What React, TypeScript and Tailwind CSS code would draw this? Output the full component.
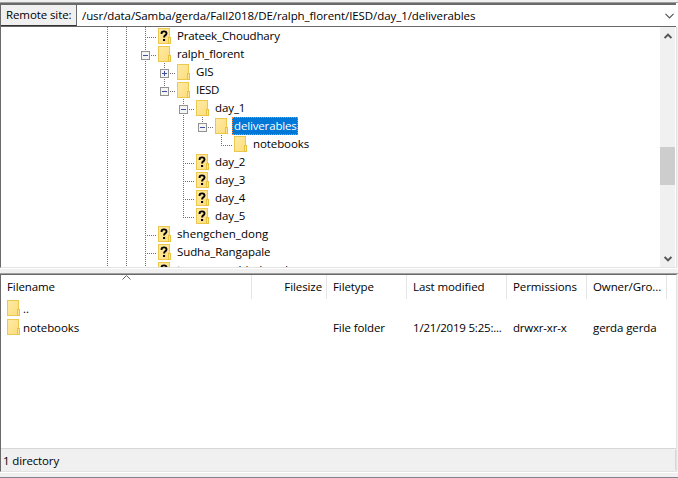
import React from "react";

type Cell = "gap" | "line" | "tee" | "end" | "minusMid" | "minusEnd" | "plusMid";

type Node = { cells: Cell[]; label: string; unknown?: boolean; selected?: boolean; tracking?: string };

const L: Cell = "line";
const G: Cell = "gap";

const nodes: Node[] = [
  { cells: [L, L, "tee"], label: "Prateek_Choudhary", unknown: true, tracking: "tracking-[-0.15px]" },
  { cells: [L, L, "minusMid"], label: "ralph_florent", tracking: "tracking-[-0.15px]" },
  { cells: [L, L, L, "plusMid"], label: "GIS" },
  { cells: [L, L, L, "minusEnd"], label: "IESD", tracking: "tracking-[-0.3px]" },
  { cells: [L, L, L, G, "minusMid"], label: "day_1" },
  { cells: [L, L, L, G, L, "minusEnd"], label: "deliverables", selected: true, tracking: "tracking-[-0.15px]" },
  { cells: [L, L, L, G, L, G, "end"], label: "notebooks" },
  { cells: [L, L, L, G, "tee"], label: "day_2", unknown: true },
  { cells: [L, L, L, G, "tee"], label: "day_3", unknown: true },
  { cells: [L, L, L, G, "tee"], label: "day_4", unknown: true },
  { cells: [L, L, L, G, "end"], label: "day_5", unknown: true },
  { cells: [L, L, "tee"], label: "shengchen_dong", unknown: true, tracking: "tracking-[0.05px]" },
  { cells: [L, L, "tee"], label: "Sudha_Rangapale", unknown: true },
  { cells: [L, L, "tee"], label: "tarunsamy_bindused", unknown: true },
];

function Folder({ unknown }: { unknown?: boolean }) {
  return (
    <svg width="13" height="16" viewBox="0 0 13 16" className="block shrink-0">
      <defs>
        <linearGradient id="fold" x1="0" y1="0" x2="1" y2="1">
          <stop offset="0" stopColor="#ffeba6" />
          <stop offset="1" stopColor="#fddc7b" />
        </linearGradient>
      </defs>
      <rect x="0.5" y="0.5" width="11" height="15" fill="url(#fold)" stroke="#ecc94e" />
      <rect x="10.5" y="9.5" width="2" height="6" fill="#ffe596" stroke="#e9c240" />
      {unknown && (
        <g fill="none" stroke="#000" strokeWidth="1.9">
          <path d="M3.6 6V4.9Q3.8 3.4 6 3.4Q8.5 3.4 8.5 5.4Q8.5 6.6 7.2 7.4Q6.1 8.1 6.1 9.6" />
          <path d="M5 12H7.1" strokeWidth="2" />
        </g>
      )}
    </svg>
  );
}

function Connector({ kind }: { kind: Cell }) {
  const boxed = kind === "minusMid" || kind === "minusEnd" || kind === "plusMid";
  const full = kind === "line" || kind === "tee" || kind === "minusMid" || kind === "plusMid";
  return (
    <svg width="19" height="18" viewBox="0 0 19 18" shapeRendering="crispEdges" className="block shrink-0 overflow-visible">
      {kind !== "gap" && (
        <path d={full ? "M9.5 0V18" : "M9.5 0V11"} stroke="#707070" strokeDasharray="1 1" />
      )}
      {kind !== "gap" && kind !== "line" && (
        <path d="M11 10.5H20" stroke="#707070" strokeDasharray="1 1" />
      )}
      {boxed && (
        <>
          <rect x="5.5" y="6.5" width="8" height="8" rx="1" fill="#f5f5f5" stroke="#919191" />
          <path d="M7 10.5H12" stroke="#3d4fa0" />
          {kind === "plusMid" && <path d="M9.5 8V13" stroke="#3d4fa0" />}
        </>
      )}
    </svg>
  );
}

function TreeRow({ node }: { node: Node }) {
  return (
    <div className="flex h-[18px] shrink-0">
      {node.cells.map((c, i) => (
        <Connector key={i} kind={c} />
      ))}
      <div className="w-[19px] shrink-0 pl-[3px] pt-px">
        <Folder unknown={node.unknown} />
      </div>
      <span
        className={
          (node.selected
            ? "ml-px w-[66px] border border-dotted border-[#ff8728] bg-[#0078d7] pl-px leading-[15px] text-white "
            : "ml-px pl-[2px] leading-[17px] ") +
          "h-[18px] whitespace-nowrap " +
          (node.tracking ?? "tracking-[-0.1px]")
        }
      >
        {node.label}
      </span>
    </div>
  );
}

const cols = [
  { w: "w-[250px]", text: "Filename" },
  { w: "w-[74px] text-right", text: "Filesize" },
  { w: "w-[79px]", text: "Filetype" },
  { w: "w-[99px]", text: "Last modified" },
  { w: "w-[79px]", text: "Permissions" },
  { w: "w-[79px]", text: "Owner/Gro..." },
];

export default function App() {
  return (
    <div className="flex h-[478px] w-[678px] flex-col overflow-hidden bg-[#f0f0f0] font-['Open_Sans','Noto_Sans',sans-serif] text-[11.5px] text-black">
      <div className="h-[3px] shrink-0 border-b border-[#a0a0a0]" />
      <div className="flex h-6 shrink-0 border-r-2 border-white">
        <div className="flex w-full border-b border-l border-t-2 border-[#696969]">
          <div className="w-[76px] shrink-0 whitespace-nowrap border-b border-r border-b-[#333] border-r-[#696969] pl-[5px] leading-[20px] tracking-[-0.1px]">
            Remote site:
          </div>
          <div className="flex flex-1 items-center justify-between bg-white pl-[5px] pr-[2px]">
            <span className="leading-[20px] tracking-[-0.075px]">/usr/data/Samba/gerda/Fall2018/DE/ralph_florent/IESD/day_1/deliverables</span>
            <svg width="9" height="6" viewBox="0 0 9 6" className="shrink-0">
              <path d="M.5 .8L4.5 4.8L8.5 .8" fill="none" stroke="#555" strokeWidth="1.2" />
            </svg>
          </div>
        </div>
      </div>

      <div className="flex h-[242px] shrink-0 border-b border-white">
        <div className="flex w-[677px] border-b border-l border-r border-b-[#e3e3e3] border-l-[#696969] border-r-[#e3e3e3] bg-white">
          <div className="flex flex-1 flex-col overflow-hidden pl-[97px]">
            {nodes.map((n) => (
              <TreeRow key={n.label} node={n} />
            ))}
          </div>
          <div className="mr-px flex w-[15px] flex-col items-center bg-[#f0f0f0] pb-[5px] pt-[6px]">
            <svg width="8" height="6" viewBox="0 0 8 6" className="shrink-0">
              <path d="M.6 5L4 1.6L7.4 5" fill="none" stroke="#555" strokeWidth="2" />
            </svg>
            <div className="mt-[108px] h-[38px] w-full bg-[#cdcdcd]" />
            <svg width="8" height="6" viewBox="0 0 8 6" className="mt-auto shrink-0">
              <path d="M.6 1L4 4.4L7.4 1" fill="none" stroke="#555" strokeWidth="2" />
            </svg>
          </div>
        </div>
      </div>

      <div className="h-[5px] shrink-0 border-b border-[#a0a0a0]" />

      <div className="flex h-[199px] shrink-0 border-b border-white">
        <div className="flex w-[677px] flex-col border-b border-l border-r border-t border-b-[#e3e3e3] border-l-[#696969] border-r-[#e3e3e3] border-t-[#696969] bg-white">
          <div className="relative flex h-6 shrink-0">
            {cols.map((c) => (
              <div key={c.text} className={"box-content shrink-0 border-r border-[#e5e5e5] leading-[24px] tracking-[-0.1px] " + c.w}>
                <div className="whitespace-nowrap pl-[6px] pr-[4px]">{c.text}</div>
              </div>
            ))}
            <svg width="9" height="5" viewBox="0 0 9 5" className="absolute left-[121px] top-0">
              <path d="M.5 4.5L4.5 .5L8.5 4.5" fill="none" stroke="#666" />
            </svg>
          </div>
          <div className="flex flex-1 flex-col pt-px leading-[18px] tracking-[-0.1px]">
            <div className="flex h-[19px] pl-[6px]">
              <Folder />
              <span className="pl-[3px]">..</span>
            </div>
            <div className="flex h-[19px] whitespace-nowrap pl-[6px]">
              <div className="flex w-[326px]">
                <Folder />
                <span className="pl-[3px]">notebooks</span>
              </div>
              <span className="w-20">File folder</span>
              <span className="w-[100px] tracking-[-0.2px]">1/21/2019 5:25:...</span>
              <span className="w-20 tracking-[-0.2px]">drwxr-xr-x</span>
              <span>gerda gerda</span>
            </div>
          </div>
          <div className="h-[23px] shrink-0 border-t border-[#d7d7d7] bg-[#f0f0f0]">
            <div className="mt-px h-5 border-r border-[#d7d7d7] pl-[2px] leading-[22px] tracking-[-0.15px]">1 directory</div>
          </div>
        </div>
      </div>
      <div className="h-[5px] shrink-0 border-b border-[#868090]" />
    </div>
  );
}
